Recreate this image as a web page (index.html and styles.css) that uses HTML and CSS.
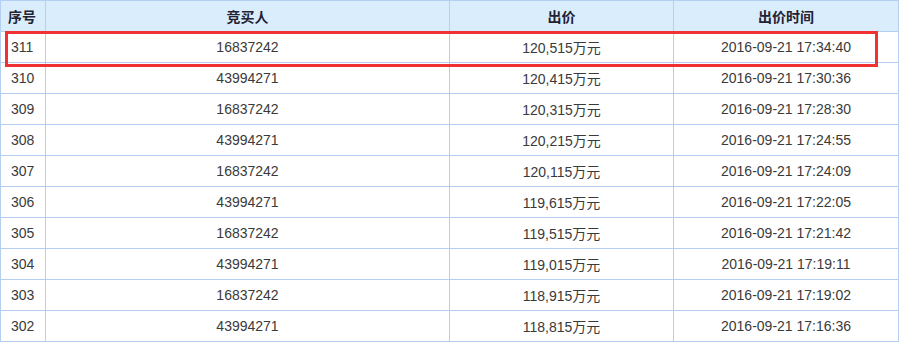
FILE: index.html
```html
<!DOCTYPE html>
<html lang="zh">
<head>
<meta charset="utf-8">
<link rel="stylesheet" href="styles.css">
</head>
<body>
<div class="wrap">
  <table class="bids">
    <colgroup>
      <col class="c1"><col class="c2"><col class="c3"><col class="c4">
    </colgroup>
    <thead>
      <tr><th class="first">序号</th><th>竞买人</th><th>出价</th><th>出价时间</th></tr>
    </thead>
    <tbody>
      <tr><td class="first">311</td><td>16837242</td><td>120,515万元</td><td>2016-09-21 17:34:40</td></tr>
      <tr><td class="first">310</td><td>43994271</td><td>120,415万元</td><td>2016-09-21 17:30:36</td></tr>
      <tr><td class="first">309</td><td>16837242</td><td>120,315万元</td><td>2016-09-21 17:28:30</td></tr>
      <tr><td class="first">308</td><td>43994271</td><td>120,215万元</td><td>2016-09-21 17:24:55</td></tr>
      <tr><td class="first">307</td><td>16837242</td><td>120,115万元</td><td>2016-09-21 17:24:09</td></tr>
      <tr><td class="first">306</td><td>43994271</td><td>119,615万元</td><td>2016-09-21 17:22:05</td></tr>
      <tr><td class="first">305</td><td>16837242</td><td>119,515万元</td><td>2016-09-21 17:21:42</td></tr>
      <tr><td class="first">304</td><td>43994271</td><td>119,015万元</td><td>2016-09-21 17:19:11</td></tr>
      <tr><td class="first">303</td><td>16837242</td><td>118,915万元</td><td>2016-09-21 17:19:02</td></tr>
      <tr><td class="first">302</td><td>43994271</td><td>118,815万元</td><td>2016-09-21 17:16:36</td></tr>
    </tbody>
  </table>
  <div class="highlight"></div>
</div>
</body>
</html>
```

FILE: styles.css
```css
html, body {
  margin: 0;
  padding: 0;
  background: #ffffff;
}

.wrap {
  position: relative;
  width: 898px;
}

.bids {
  border-collapse: collapse;
  table-layout: fixed;
  width: 898px;
  font-family: "Liberation Sans", Arial, "Noto Sans CJK SC", sans-serif;
  font-size: 14px;
  color: #3a3a3a;
}

.c1 { width: 45px; }
.c2 { width: 404px; }
.c3 { width: 224px; }
.c4 { width: 225px; }

.bids th,
.bids td {
  border: 1px solid #b4cff2;
  height: 30px;
  padding: 0;
  text-align: center;
  vertical-align: middle;
  box-sizing: content-box;
}

.bids th {
  background: #daedfd;
  font-family: "Noto Sans CJK SC", "Liberation Sans", sans-serif;
  font-weight: bold;
  font-size: 14px;
  color: #222233;
}

.bids th.first {
  text-align: left;
  padding-left: 7px;
}

.bids td.first {
  text-align: left;
  padding-left: 10px;
}

.highlight {
  position: absolute;
  left: 5px;
  top: 31px;
  width: 873px;
  height: 36px;
  border: 3px solid #f03232;
  box-sizing: border-box;
  pointer-events: none;
}
```
